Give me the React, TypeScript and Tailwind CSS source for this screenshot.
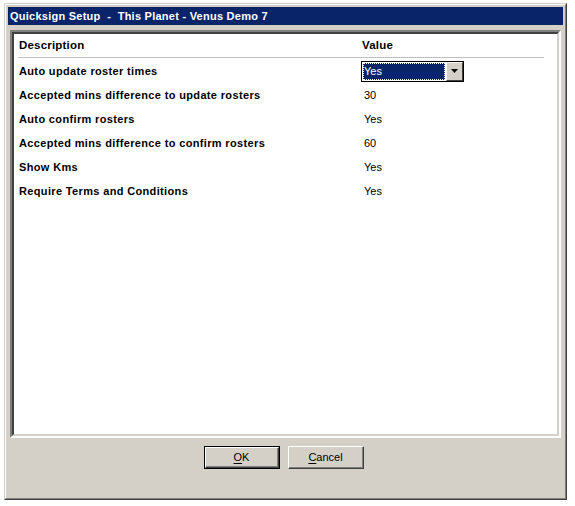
const rows: [string, string][] = [
  ['Auto update roster times', 'Yes'],
  ['Accepted mins difference to update rosters', '30'],
  ['Auto confirm rosters', 'Yes'],
  ['Accepted mins difference to confirm rosters', '60'],
  ['Show Kms', 'Yes'],
  ['Require Terms and Conditions', 'Yes'],
]

function Combo({ value }: { value: string }) {
  return (
    <div className="flex h-[21px] w-[103px] border border-black bg-white">
      <div className="m-px flex flex-1 items-center bg-[#0a246a] outline-1 outline-dotted outline-white -outline-offset-1">
        <span className="pl-px text-[11px] leading-none text-white">{value}</span>
      </div>
      <div className="flex w-[17px] items-center justify-center border border-t-white border-l-white border-r-[#404040] border-b-[#404040] bg-[#d4d0c8]">
        <svg width="7" height="4" viewBox="0 0 7 4">
          <path d="M0 0h7L3.5 4z" fill="#000" />
        </svg>
      </div>
    </div>
  )
}

function Button({ label, hot, isDefault }: { label: string; hot: string; isDefault?: boolean }) {
  return (
    <div className={`h-[23px] w-[76px] ${isDefault ? 'border border-black' : ''}`}>
      <div className="flex h-full w-full items-center justify-center border border-t-white border-l-white border-r-[#404040] border-b-[#404040] bg-[#d4d0c8] shadow-[inset_-1px_-1px_0_#808080]">
        <span className="text-[11px] text-black">
          <span className="underline underline-offset-2">{hot}</span>
          {label.slice(hot.length)}
        </span>
      </div>
    </div>
  )
}

export default function App() {
  return (
    <div className="h-[506px] w-[575px] bg-white pl-[4px] pt-[3px] font-['Liberation_Sans',Arial,sans-serif]">
      <div className="h-[497px] w-[563px] border border-t-[#d4d0c8] border-l-[#d4d0c8] border-r-[#404040] border-b-[#404040]">
        <div className="flex h-full flex-col border border-t-white border-l-white border-r-[#808080] border-b-[#808080] bg-[#d4d0c8] p-[2px]">
          <div className="flex h-[18px] items-center bg-[#0a246a] pl-[2px]">
            <span className="whitespace-pre text-[11px] font-bold tracking-[0.25px] text-white">Quicksign Setup  -  This Planet - Venus Demo 7</span>
          </div>
          <div className="flex flex-1 flex-col px-[2px] pt-[5px]">
            <div className="flex-1 border-2 border-t-[#808080] border-l-[#808080] border-r-white border-b-white">
              <div className="h-full border-2 border-t-[#404040] border-l-[#404040] border-r-[#d4d0c8] border-b-[#d4d0c8] bg-white px-[4px]">
                <div className="mr-[9px] flex h-[24px] items-center border-b border-[#c0c0c0] pl-[1px]">
                  <span className="w-[343px] text-[11.5px] font-bold tracking-[0.2px]">Description</span>
                  <span className="text-[11.5px] font-bold tracking-[0.2px]">Value</span>
                </div>
                <div className="pt-[1px]">
                  {rows.map(([label, value], i) => (
                    <div key={label} className="flex h-[24px] items-center pl-[1px]">
                      <span className="w-[342px] text-[11px] font-bold tracking-[0.35px] text-black">{label}</span>
                      {i === 0 ? (
                        <Combo value={value} />
                      ) : (
                        <span className="pl-[3px] text-[11px] text-black">{value}</span>
                      )}
                    </div>
                  ))}
                </div>
              </div>
            </div>
            <div className="flex h-[58px] justify-center gap-[8px] pt-[8px] pr-[4px]">
              <Button label="OK" hot="O" isDefault />
              <Button label="Cancel" hot="C" />
            </div>
          </div>
        </div>
      </div>
    </div>
  )
}
